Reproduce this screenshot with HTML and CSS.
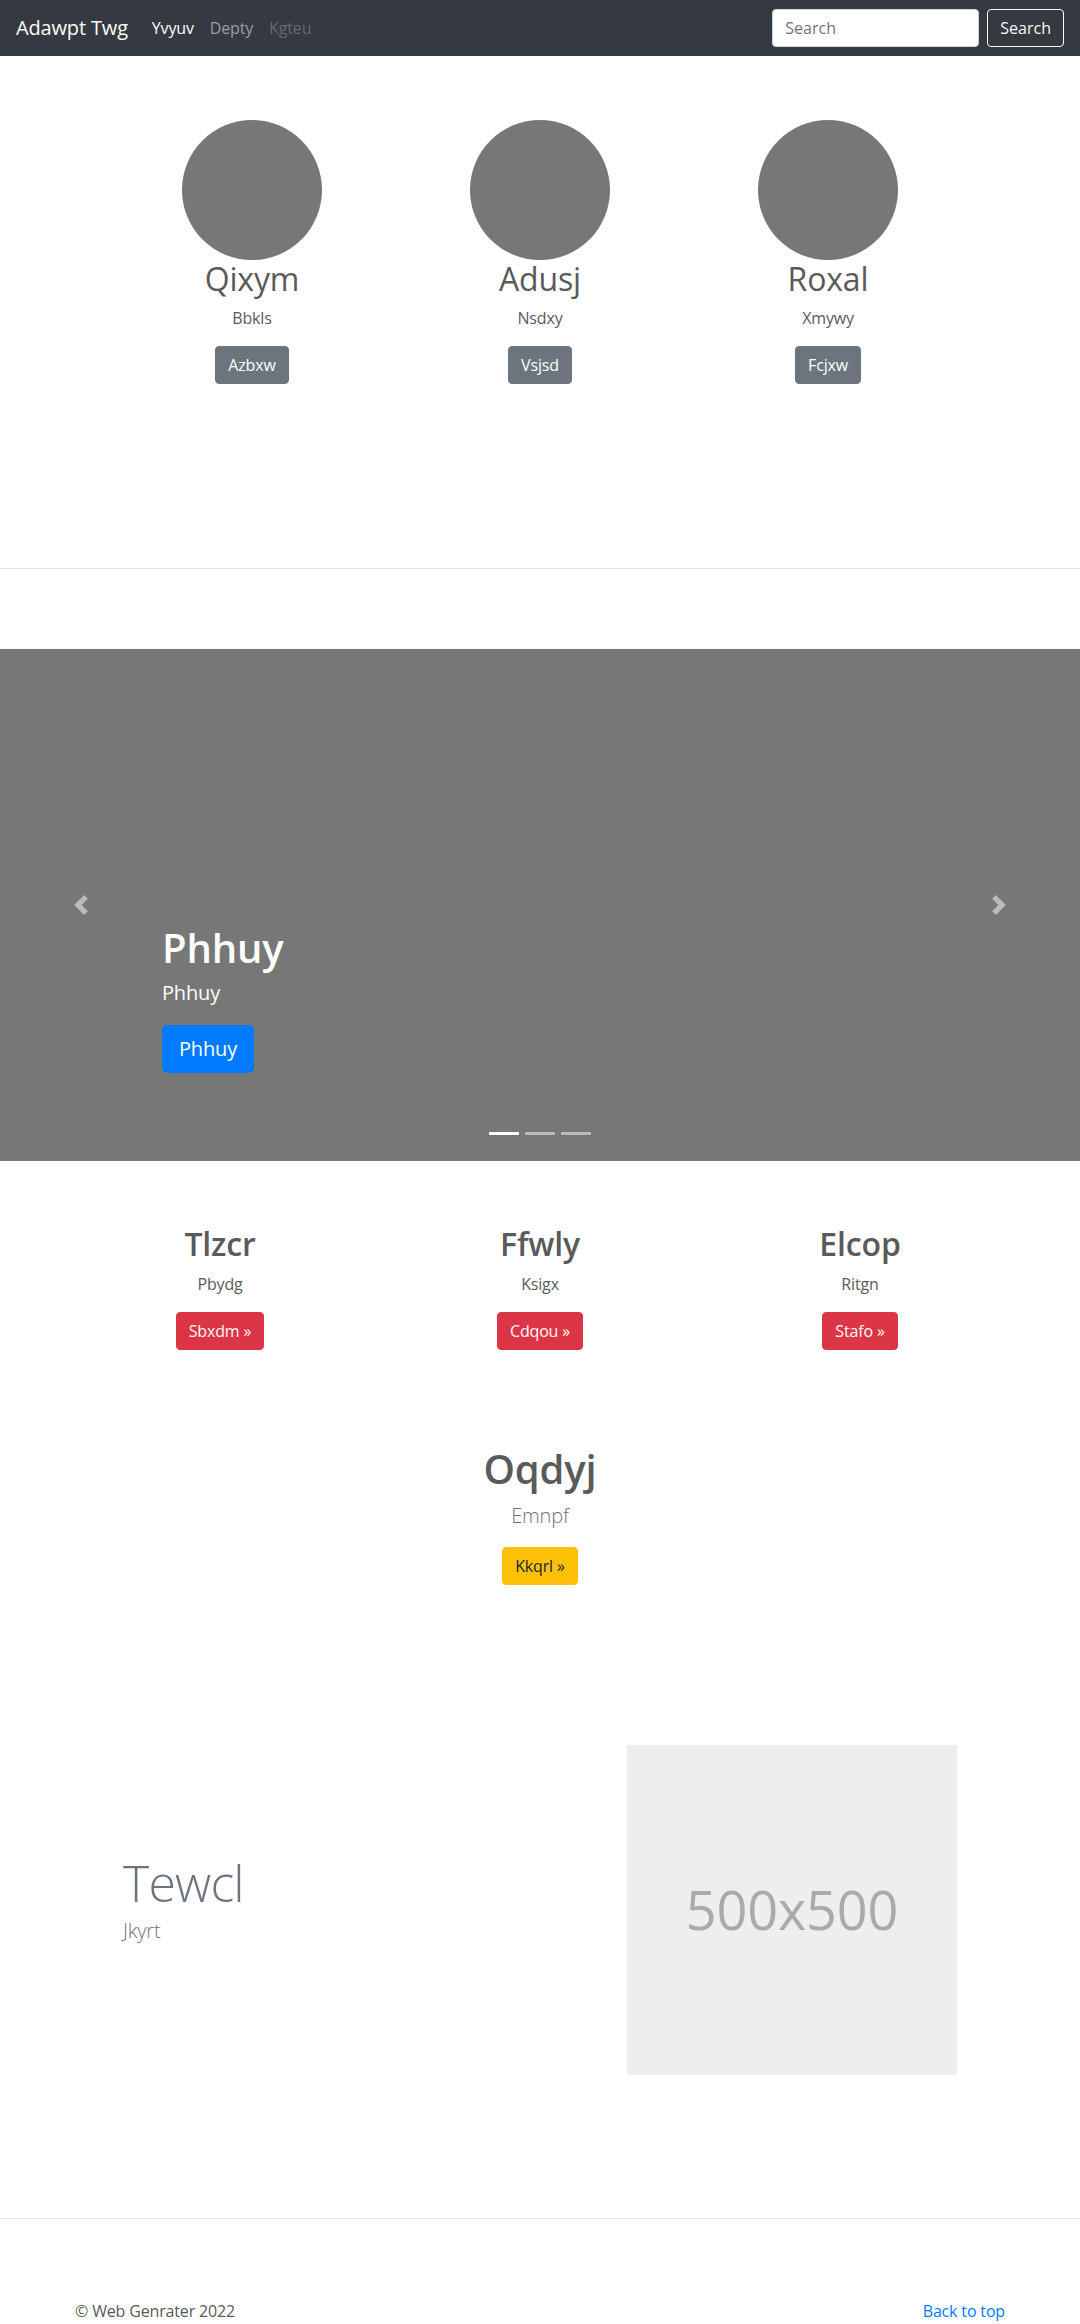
FILE: index.html
```html
<!DOCTYPE html>
<html lang="en">
<head>
<meta charset="utf-8">
<title>Adawpt Twg</title>
<link rel="stylesheet" href="styles.css">
</head>
<body>
<nav class="navbar">
  <a class="brand" href="#">Adawpt Twg</a>
  <ul class="nav">
    <li><a class="nav-link active" href="#">Yvyuv</a></li>
    <li><a class="nav-link" href="#">Depty</a></li>
    <li><a class="nav-link disabled" href="#">Kgteu</a></li>
  </ul>
  <form class="search">
    <input class="search-input" type="text" placeholder="Search">
    <button class="btn btn-outline-light" type="button">Search</button>
  </form>
</nav>

<main>
  <section class="team">
    <div class="team-col">
      <div class="avatar"></div>
      <h2 class="team-name">Qixym</h2>
      <p>Bbkls</p>
      <p><a class="btn btn-secondary" href="#">Azbxw</a></p>
    </div>
    <div class="team-col">
      <div class="avatar"></div>
      <h2 class="team-name">Adusj</h2>
      <p>Nsdxy</p>
      <p><a class="btn btn-secondary" href="#">Vsjsd</a></p>
    </div>
    <div class="team-col">
      <div class="avatar"></div>
      <h2 class="team-name">Roxal</h2>
      <p>Xmywy</p>
      <p><a class="btn btn-secondary" href="#">Fcjxw</a></p>
    </div>
  </section>

  <hr class="divider divider-top">

  <div class="carousel">
    <a class="control control-prev" href="#">
      <svg width="20" height="20" viewBox="0 0 8 8"><path fill="#fff" d="M5.25 0l-4 4 4 4 1.5-1.5L4.25 4l2.5-2.5L5.25 0z"/></svg>
    </a>
    <a class="control control-next" href="#">
      <svg width="20" height="20" viewBox="0 0 8 8"><path fill="#fff" d="M2.75 0l-1.5 1.5L3.75 4l-2.5 2.5L2.75 8l4-4-4-4z"/></svg>
    </a>
    <div class="caption">
      <h1 class="caption-title">Phhuy</h1>
      <p class="caption-text">Phhuy</p>
      <p class="caption-action"><a class="btn btn-lg btn-primary" href="#">Phhuy</a></p>
    </div>
    <ol class="indicators">
      <li class="active"></li>
      <li></li>
      <li></li>
    </ol>
  </div>

  <section class="features">
    <div class="feature-col">
      <h2 class="feature-title">Tlzcr</h2>
      <p>Pbydg</p>
      <p><a class="btn btn-danger" href="#">Sbxdm »</a></p>
    </div>
    <div class="feature-col">
      <h2 class="feature-title">Ffwly</h2>
      <p>Ksigx</p>
      <p><a class="btn btn-danger" href="#">Cdqou »</a></p>
    </div>
    <div class="feature-col">
      <h2 class="feature-title">Elcop</h2>
      <p>Ritgn</p>
      <p><a class="btn btn-danger" href="#">Stafo »</a></p>
    </div>
  </section>

  <section class="highlight">
    <h2 class="highlight-title">Oqdyj</h2>
    <p class="lead">Emnpf</p>
    <p><a class="btn btn-warning" href="#">Kkqrl »</a></p>
  </section>

  <section class="featurette">
    <div class="featurette-text">
      <h2 class="featurette-heading">Tewcl</h2>
      <p class="lead muted">Jkyrt</p>
    </div>
    <div class="featurette-media">
      <div class="placeholder">500x500</div>
    </div>
  </section>

  <hr class="divider divider-bottom">

  <footer class="footer">
    <p>© Web Genrater 2022</p>
    <p><a class="link" href="#">Back to top</a></p>
  </footer>
</main>
</body>
</html>
```

FILE: styles.css
```css
* { box-sizing: border-box; }

html, body {
  margin: 0;
  padding: 0;
}

body {
  font-family: "Open Sans", "Noto Sans", "Liberation Sans", Arial, sans-serif;
  font-size: 16px;
  line-height: 1.5;
  color: #5a5a5a;
  background: #fff;
  letter-spacing: -0.01em;
}

p { margin: 0 0 16px; }
h1, h2 { margin: 0 0 8px; line-height: 1.2; }

/* Navbar */
.navbar {
  display: flex;
  align-items: center;
  height: 56px;
  padding: 8px 16px;
  background: #343a40;
}
.brand {
  font-size: 20px;
  line-height: 30px;
  padding: 5px 0;
  margin-right: 16px;
  color: #fff;
  text-decoration: none;
}
.nav {
  display: flex;
  list-style: none;
  margin: 0;
  padding: 0;
}
.nav-link {
  display: block;
  padding: 8px;
  color: rgba(255, 255, 255, 0.5);
  text-decoration: none;
}
.nav-link.active { color: #fff; }
.nav-link.disabled { color: rgba(255, 255, 255, 0.25); }

.search {
  margin: 0 0 0 auto;
  display: flex;
  align-items: center;
}
.search-input {
  width: 207px;
  height: 38px;
  padding: 6px 12px;
  margin-right: 8px;
  font: inherit;
  color: #495057;
  background: #fff;
  border: 1px solid #ced4da;
  border-radius: 4px;
}
.search-input::placeholder { color: #6c757d; }

/* Buttons */
.btn {
  display: inline-block;
  font-family: inherit;
  font-size: 16px;
  line-height: 24px;
  padding: 6px 12px;
  border: 1px solid transparent;
  border-radius: 4px;
  text-decoration: none;
  cursor: pointer;
  vertical-align: middle;
}
.btn-lg {
  font-size: 20px;
  line-height: 30px;
  padding: 8px 16px;
  border-radius: 5px;
}
.btn-outline-light { color: #f8f9fa; border-color: #f8f9fa; background: transparent; }
.btn-secondary { color: #fff; background: #6c757d; border-color: #6c757d; }
.btn-primary { color: #fff; background: #007bff; border-color: #007bff; }
.btn-danger { color: #fff; background: #dc3545; border-color: #dc3545; }
.btn-warning { color: #212529; background: #ffc107; border-color: #ffc107; }

/* Team */
.team {
  width: 864px;
  margin: 0 auto;
  padding-top: 64px;
  display: grid;
  grid-template-columns: repeat(3, 1fr);
}
.team-col {
  padding: 0 15px;
  text-align: center;
}
.avatar {
  width: 140px;
  height: 140px;
  margin: 0 auto;
  border-radius: 50%;
  background: #777;
}
.team-name {
  font-size: 32px;
  font-weight: 400;
}

/* Dividers */
.divider {
  border: 0;
  border-top: 1px solid rgba(0, 0, 0, 0.1);
  height: 0;
}
.divider-top { margin: 168px 0 80px; }
.divider-bottom { margin: 143px 0 80px; }

/* Carousel */
.carousel {
  position: relative;
  height: 512px;
  background: #777;
}
.control {
  position: absolute;
  top: 0;
  bottom: 0;
  width: 15%;
  display: flex;
  align-items: center;
  justify-content: center;
  opacity: 0.5;
}
.control-prev { left: 0; }
.control-next { right: 0; }
.caption {
  position: absolute;
  left: 15%;
  right: 15%;
  bottom: 52px;
  padding: 20px 0;
  color: #fff;
}
.caption-title {
  font-size: 40px;
  font-weight: 600;
  margin-bottom: 6px;
}
.caption-text {
  font-size: 20px;
  line-height: 30px;
}
.caption-action { margin-bottom: 16px; line-height: 48px; }
.indicators {
  position: absolute;
  left: 15%;
  right: 15%;
  bottom: 0;
  margin: 0 0 16px;
  padding: 0;
  list-style: none;
  display: flex;
  justify-content: center;
}
.indicators li {
  box-sizing: content-box;
  width: 30px;
  height: 3px;
  margin: 0 3px;
  background: #fff;
  background-clip: padding-box;
  border-top: 10px solid transparent;
  border-bottom: 10px solid transparent;
  opacity: 0.5;
}
.indicators li.active { opacity: 1; }

/* Features */
.features {
  width: 960px;
  margin: 64px auto 0;
  display: grid;
  grid-template-columns: repeat(3, 1fr);
}
.feature-col {
  padding: 0 15px;
  text-align: center;
}
.feature-title {
  font-size: 32px;
  font-weight: 600;
}

.highlight {
  width: 960px;
  margin: 79px auto 0;
  padding-bottom: 16px;
  text-align: center;
}
.highlight p:last-child { margin-bottom: 0; }
.highlight-title {
  font-size: 40px;
  font-weight: 600;
}
.lead {
  font-size: 20px;
  line-height: 30px;
  font-weight: 300;
  color: #6c757d;
}

/* Featurette */
.featurette {
  width: 864px;
  margin: 144px auto 0;
  display: grid;
  grid-template-columns: 7fr 5fr;
  align-items: center;
}
.featurette-text { padding: 0 15px; }
.featurette-media { padding: 0 15px; }
.featurette-heading {
  font-size: 50px;
  font-weight: 300;
  line-height: 1;
  letter-spacing: -0.8px;
  color: #6c757d;
}
.muted { color: #6c757d; }
.placeholder {
  width: 330px;
  height: 330px;
  background: #eee;
  color: #aaa;
  font-size: 54px;
  display: flex;
  align-items: center;
  justify-content: center;
}

/* Footer */
.footer {
  width: 960px;
  margin: 0 auto;
  padding: 0 15px;
  display: flex;
  justify-content: space-between;
}
.footer p { margin: 0; }
.link { color: #007bff; text-decoration: none; }
```
